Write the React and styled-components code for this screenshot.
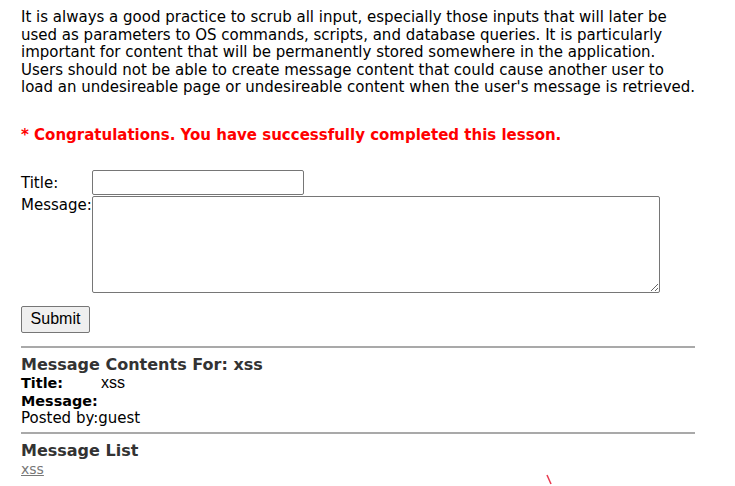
import React, { useState } from 'react';
import styled, { createGlobalStyle } from 'styled-components';

const Global = createGlobalStyle`
  body {
    margin: 0;
    background: #fff;
    font-family: Verdana, "DejaVu Sans", sans-serif;
    color: #000;
  }
`;

const Page = styled.div`
  width: 674px;
  padding: 9px 0 0 21px;
  position: relative;
  height: 477px;
  overflow: hidden;
`;

const Intro = styled.p`
  margin: 0;
  font-size: 15px;
  line-height: 17.6px;
  color: #000;
  white-space: nowrap;
`;

const Notice = styled.p`
  margin: 29px 0 0;
  font-size: 15px;
  line-height: 18px;
  font-weight: bold;
  color: #f00;
`;

const Form = styled.form`
  margin-top: 26px;
  display: grid;
  grid-template-columns: 71px auto;
  row-gap: 1px;
  align-items: start;
  justify-items: start;
  font-size: 15px;
`;

const Label = styled.label`
  padding-top: ${p => p.$top ?? 4}px;
`;

const TextInput = styled.input`
  width: 206px;
  height: 19px;
  border: 1px solid #767676;
  border-radius: 2px;
  padding: 2px;
  margin: 0;
`;

const Area = styled.textarea`
  width: 562px;
  height: 91px;
  border: 1px solid #767676;
  border-radius: 2px;
  padding: 2px;
  margin: 0;
  resize: both;
`;

const Button = styled.button`
  margin-top: 13px;
  width: 69px;
  height: 27px;
  font-family: Arial, "Liberation Sans", sans-serif;
  font-size: 16px;
  background: #efefef;
  border: 1px solid #767676;
  border-radius: 2px;
  color: #000;
  padding: 0;
`;

const Rule = styled.hr`
  margin: ${p => p.$top}px 0 0;
  border: 0;
  border-top: 2px solid #a9a9a9;
`;

const Heading = styled.h3`
  margin: ${p => p.$top ?? 7}px 0 0;
  font-size: 16px;
  line-height: 19px;
  font-weight: bold;
  color: #333;
`;

const Row = styled.div`
  display: flex;
  align-items: baseline;
  font-size: 15px;
  line-height: 17.6px;
`;

const Key = styled.b`
  width: 80px;
  font-size: 14.4px;
`;

const Plain = styled.span`
  font-family: Arial, "Liberation Sans", sans-serif;
  font-size: 16px;
`;

const Link = styled.a`
  display: block;
  margin-top: 1px;
  font-size: 14px;
  color: #777;
  text-decoration: underline;
`;

const Mark = styled.svg`
  position: absolute;
  left: 546px;
  top: 474px;
`;

export default function App() {
  const [title, setTitle] = useState('');
  const [msg, setMsg] = useState('');

  return (
    <Page>
      <Global />
      <Intro>
        It is always a good practice to scrub all input, especially those inputs that will later be<br />
        used as parameters to OS commands, scripts, and database queries. It is particularly<br />
        important for content that will be permanently stored somewhere in the application.<br />
        Users should not be able to create message content that could cause another user to<br />
        load an undesireable page or undesireable content when the user's message is retrieved.
      </Intro>
      <Notice>* Congratulations. You have successfully completed this lesson.</Notice>
      <Form onSubmit={e => e.preventDefault()}>
        <Label>Title:</Label>
        <TextInput value={title} onChange={e => setTitle(e.target.value)} />
        <Label $top={0}>Message:</Label>
        <Area value={msg} onChange={e => setMsg(e.target.value)} />
      </Form>
      <Button type="button">Submit</Button>
      <Rule $top={13} />
      <Heading $top={7}>Message Contents For: xss</Heading>
      <Row><Key>Title:</Key><Plain>xss</Plain></Row>
      <Row><Key>Message:</Key></Row>
      <Row>Posted by:guest</Row>
      <Rule $top={4} />
      <Heading $top={7}>Message List</Heading>
      <Link href="#">xss</Link>
      <Mark width="8" height="12" viewBox="0 0 8 12">
        <path d="M1 1 L5 10" stroke="#e8394e" strokeWidth="1.5" fill="none" />
      </Mark>
    </Page>
  );
}
